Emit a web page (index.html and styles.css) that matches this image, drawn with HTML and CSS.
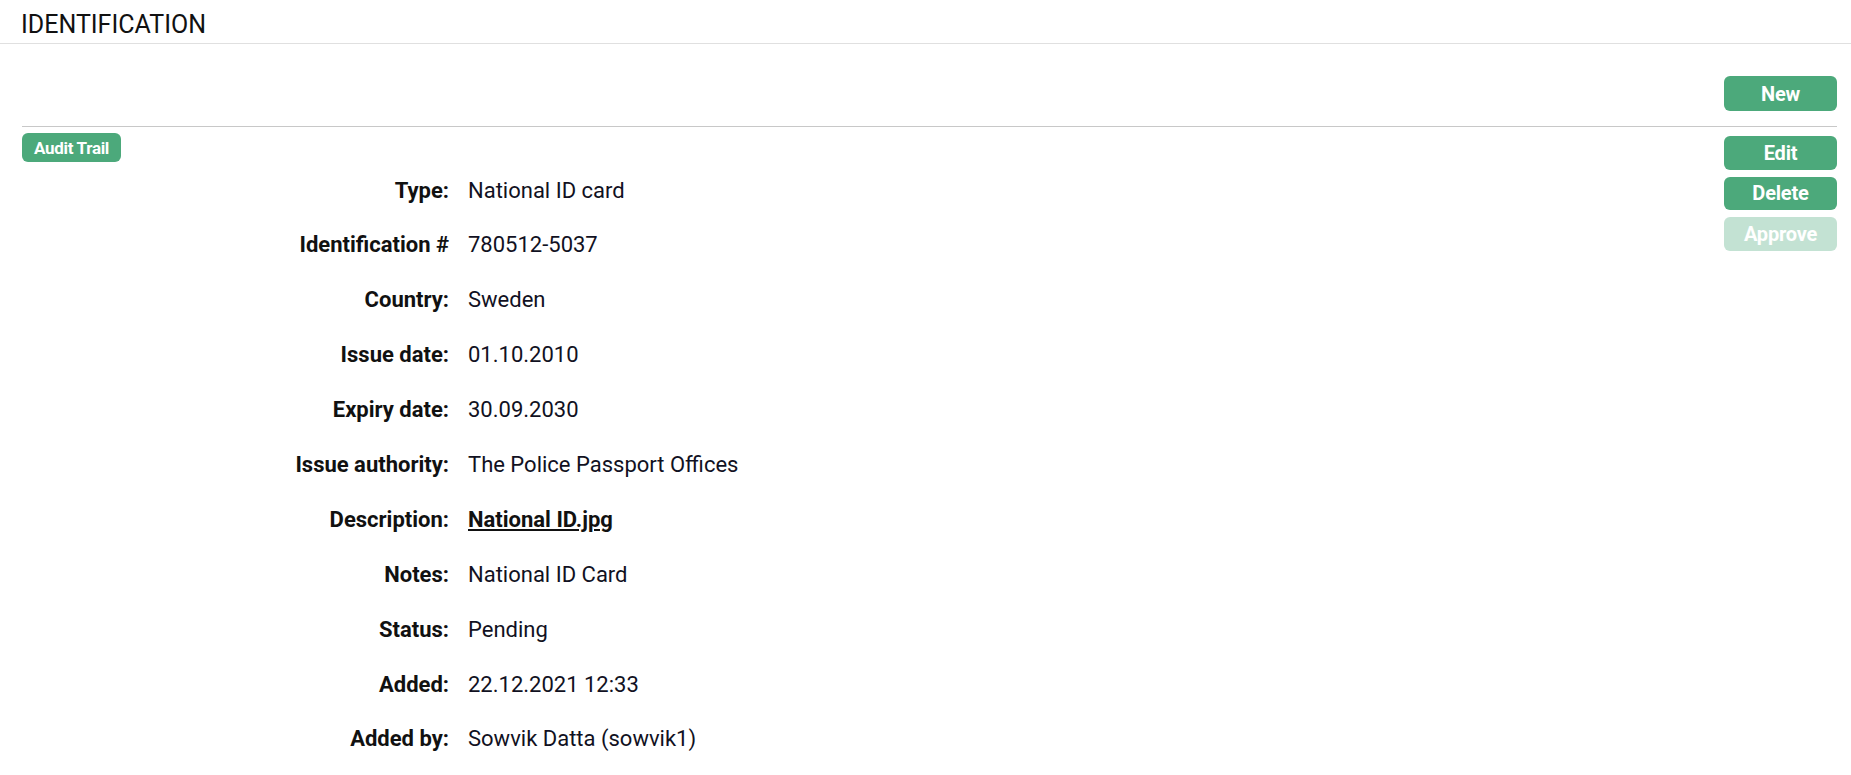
FILE: index.html
```html
<!DOCTYPE html>
<html lang="en">
<head>
<meta charset="utf-8">
<title>Identification</title>
<link rel="stylesheet" href="styles.css">
</head>
<body>
<header class="page-header">
  <h1 class="page-title">IDENTIFICATION</h1>
</header>
<main class="section">
  <div class="toolbar">
    <button class="btn btn-action" type="button">New</button>
  </div>
  <div class="record">
    <div class="record-main">
      <button class="btn btn-small" type="button">Audit Trail</button>
      <dl class="details">
        <div class="detail-row"><dt>Type:</dt><dd>National ID card</dd></div>
        <div class="detail-row"><dt>Identification #</dt><dd>780512-5037</dd></div>
        <div class="detail-row"><dt>Country:</dt><dd>Sweden</dd></div>
        <div class="detail-row"><dt>Issue date:</dt><dd>01.10.2010</dd></div>
        <div class="detail-row"><dt>Expiry date:</dt><dd>30.09.2030</dd></div>
        <div class="detail-row"><dt>Issue authority:</dt><dd>The Police Passport Offices</dd></div>
        <div class="detail-row"><dt>Description:</dt><dd><a class="file-link" href="#">National ID.jpg</a></dd></div>
        <div class="detail-row"><dt>Notes:</dt><dd>National ID Card</dd></div>
        <div class="detail-row"><dt>Status:</dt><dd>Pending</dd></div>
        <div class="detail-row"><dt>Added:</dt><dd>22.12.2021 12:33</dd></div>
        <div class="detail-row"><dt>Added by:</dt><dd>Sowvik Datta (sowvik1)</dd></div>
      </dl>
    </div>
    <div class="record-actions">
      <button class="btn btn-action" type="button">Edit</button>
      <button class="btn btn-action" type="button">Delete</button>
      <button class="btn btn-action btn-disabled" type="button" disabled>Approve</button>
    </div>
  </div>
</main>
</body>
</html>
```
FILE: styles.css
```css
html, body {
  margin: 0;
  padding: 0;
  background: #ffffff;
}

body {
  font-family: Roboto, "Liberation Sans", Arial, sans-serif;
  color: #111111;
}

.page-header {
  height: 44px;
  box-sizing: border-box;
  border-bottom: 1px solid #e0e0e0;
  padding: 9.5px 0 0 21px;
}

.page-title {
  margin: 0;
  font-size: 25px;
  font-weight: 400;
  line-height: 30px;
  color: #111111;
}

.section {
  padding: 0 14px 0 22px;
}

.toolbar {
  display: flex;
  justify-content: flex-end;
  padding: 32px 0 15px;
  border-bottom: 1px solid #c8c8c8;
}

.btn {
  font-family: Roboto, "Liberation Sans", Arial, sans-serif;
  font-weight: 700;
  color: #ffffff;
  background: #4ca97b;
  border: none;
  border-radius: 6px;
  padding: 0;
  cursor: pointer;
}

.btn-action {
  width: 113px;
  height: 35px;
  font-size: 20px;
  letter-spacing: -0.2px;
}

.btn-small {
  width: 99px;
  height: 29px;
  font-size: 17px;
  letter-spacing: -0.3px;
  border-radius: 6px;
}

.btn-disabled {
  opacity: 0.33;
  cursor: default;
}

.record {
  display: flex;
  align-items: flex-start;
}

.record-main {
  flex: 1;
  padding-top: 6px;
}

.record-actions {
  display: flex;
  flex-direction: column;
  gap: 7px;
  padding-top: 9px;
}

.record-actions .btn-action {
  height: 33.5px;
}

.details {
  margin: 13.5px 0 0;
}

.detail-row {
  display: grid;
  grid-template-columns: 427px 1fr;
  column-gap: 19px;
  height: 30px;
  margin-bottom: 24.9px;
  font-size: 22px;
  line-height: 30px;
}

.detail-row dt {
  text-align: right;
  font-weight: 700;
  color: #111111;
}

.detail-row dd {
  margin: 0;
  font-weight: 400;
  color: #111122;
}

.file-link {
  color: #111111;
  font-weight: 700;
  text-decoration: underline;
}
```
